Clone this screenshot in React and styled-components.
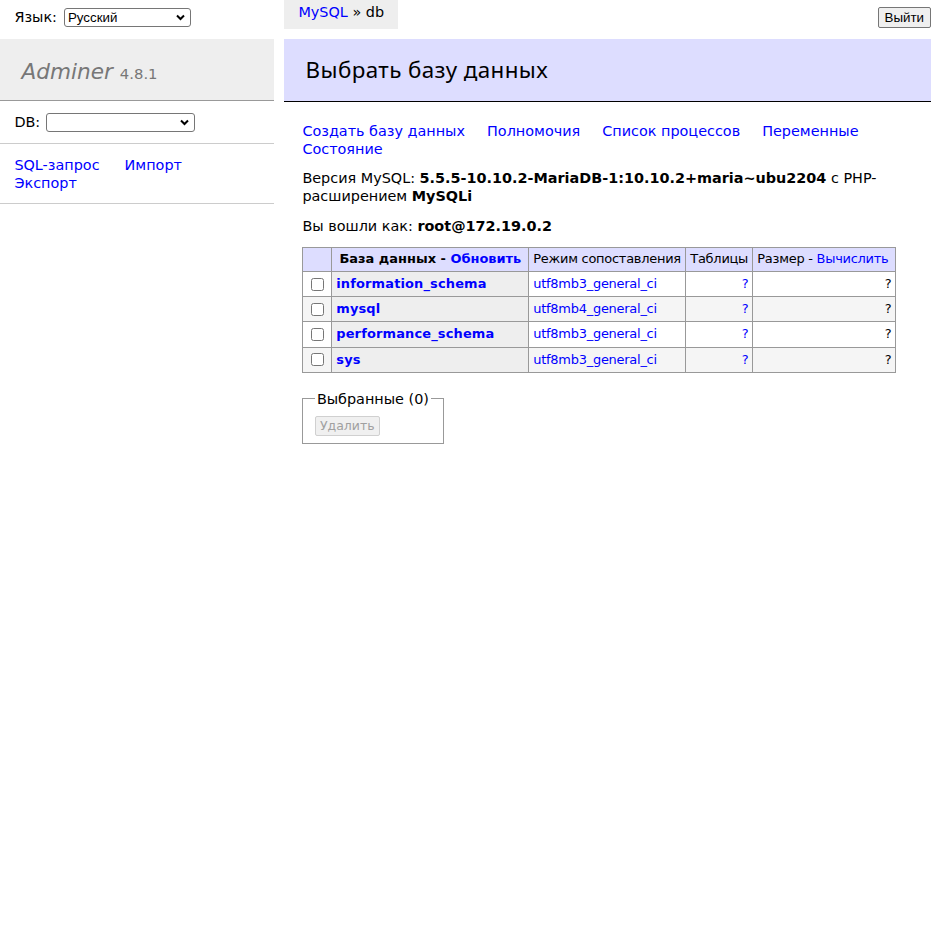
import React from 'react'
import styled, { createGlobalStyle } from 'styled-components'

const GlobalStyle = createGlobalStyle`
  html, body {
    margin: 0;
    padding: 0;
    background: #fff;
  }
  body {
    color: #000;
    font: 14.4px/1.25 "DejaVu Sans", Verdana, sans-serif;
  }
  a {
    color: blue;
    text-decoration: none;
  }
`

const Page = styled.div`
  display: flex;
  flex-direction: column;
  width: 951px;
`

const TopBar = styled.div`
  display: flex;
  align-items: flex-start;
  height: 39px;
`

const LangBox = styled.div`
  width: 284px;
  box-sizing: border-box;
  padding: 4.3px 14.4px;
  line-height: 26px;
  display: flex;
  align-items: center;
  gap: 7px;
`

const SelectWrap = styled.span`
  position: relative;
  display: inline-flex;
  width: ${p => p.$width}px;
  height: 19px;
`

const NativeSelect = styled.select`
  appearance: none;
  width: 100%;
  height: 100%;
  box-sizing: border-box;
  border: 1px solid #767676;
  border-radius: 3px;
  background: #fff;
  padding: 0 20px 0 3px;
  font: 13.33px "Liberation Sans", Arial, sans-serif;
  color: #000;
`

const Chevron = styled.svg`
  position: absolute;
  right: 6px;
  top: 6px;
  pointer-events: none;
`

const Breadcrumb = styled.div`
  background: #eee;
  height: 28.8px;
  line-height: 25.9px;
  padding: 0 14.4px;
  white-space: nowrap;
`

const Spacer = styled.div`
  flex: 1;
`

const LogoutButton = styled.button`
  margin: 7px 20px 0 0;
  height: 21px;
  padding: 0 6px;
  font: 13.33px "Liberation Sans", Arial, sans-serif;
  color: #000;
  background: #efefef;
  border: 1px solid #767676;
  border-radius: 2px;
`

const Main = styled.div`
  display: flex;
  align-items: flex-start;
`

const Sidebar = styled.div`
  width: 273.6px;
  flex: none;
`

const Logo = styled.h1`
  margin: 0;
  height: 62px;
  box-sizing: border-box;
  padding: 19px 21.6px 0;
  font-size: 21.6px;
  line-height: 27px;
  font-weight: normal;
  color: #777;
  background: #eee;
  border-bottom: 1px solid #999;
  white-space: nowrap;
`

const LogoName = styled.a`
  color: #777;
  font-style: italic;
`

const Version = styled.span`
  font-size: 14.8px;
  line-height: 0;
  color: #777;
`

const MenuBlock = styled.div`
  padding: 11.52px 14.4px;
  border-bottom: 1px solid #ccc;
  display: flex;
  align-items: center;
  gap: ${p => p.$gap || 0}px;
  flex-wrap: wrap;
`

const MenuLinks = styled.div`
  padding: 11.52px 14.4px;
  border-bottom: 1px solid #ccc;
`

const LinkRow = styled.div`
  display: flex;
  flex-wrap: wrap;
  column-gap: ${p => p.$gap || 25}px;
`

const Content = styled.div`
  flex: 1;
  margin-left: 10.4px;
  padding-right: 20px;
`

const Title = styled.h2`
  margin: 0 0 20px;
  padding: 17.28px 21.6px;
  font: 400 22.4px/27px "Noto Sans", "Open Sans", sans-serif;
  letter-spacing: 0.4px;
  color: #000;
  background: #ddf;
  border-bottom: 1px solid #000;
`

const Body = styled.div`
  padding-left: 18.4px;
`

const Para = styled.p`
  margin: ${p => (p.$first ? 0 : '11.52px')} 20px 0 0;
`

const DbTable = styled.table`
  margin-top: 12.5px;
  border-collapse: collapse;
  table-layout: fixed;
  width: 593px;
  font-size: 12.96px;
  line-height: 16.2px;
`

const HeadRow = styled.tr`
  height: 24px;
  background: #ddf;
`

const Row = styled.tr`
  height: 25px;
  background: ${p => (p.$odd ? '#f5f5f5' : '#fff')};
`

const Cell = styled.td`
  border: 1px solid #999;
  padding: 2.6px 3.9px;
  text-align: ${p => p.$align || 'left'};
  letter-spacing: -0.25px;
  white-space: nowrap;
  overflow: hidden;
`

const HeadTh = styled.th`
  border: 1px solid #999;
  padding: 2.6px 6.5px;
  text-align: center;
  white-space: nowrap;
`

const NameTh = styled.th`
  border: 1px solid #999;
  padding: 2.6px 3.9px;
  text-align: left;
  background: #eee;
  letter-spacing: 0.15px;
  white-space: nowrap;
`

const Check = styled.input`
  margin: 3px 3px 3px 4px;
  width: 13px;
  height: 13px;
  vertical-align: middle;
`

const Fieldset = styled.fieldset`
  display: inline-block;
  align-self: flex-start;
  margin: 17px 0 0;
  padding: 8px 11.5px 7.5px;
  border: 1px solid #999;
  width: 117px;
`

const Legend = styled.legend`
  padding: 0 2px;
  line-height: 18px;
`

const DisabledButton = styled.button`
  height: 20px;
  padding: 0 4px;
  font: 12.5px "DejaVu Sans", Verdana, sans-serif;
  color: #a0a0a0;
  background: #f0f0f0;
  border: 1px solid #d0d0d0;
  border-radius: 2px;
`

const BodyCol = styled.div`
  display: flex;
  flex-direction: column;
`

const databases = [
  { name: 'information_schema', collation: 'utf8mb3_general_ci' },
  { name: 'mysql', collation: 'utf8mb4_general_ci' },
  { name: 'performance_schema', collation: 'utf8mb3_general_ci' },
  { name: 'sys', collation: 'utf8mb3_general_ci' },
]

const Select = ({ width, children }) => (
  <SelectWrap $width={width}>
    <NativeSelect>{children}</NativeSelect>
    <Chevron width="9" height="7" viewBox="0 0 9 7">
      <path d="M1 1.5 L4.5 5 L8 1.5" stroke="#000" strokeWidth="2" fill="none" />
    </Chevron>
  </SelectWrap>
)

export default function App() {
  return (
    <Page>
      <GlobalStyle />
      <TopBar>
        <LangBox>
          Язык:
          <Select width={127}>
            <option>Русский</option>
          </Select>
        </LangBox>
        <Breadcrumb>
          <a href="#">MySQL</a> » db
        </Breadcrumb>
        <Spacer />
        <LogoutButton>Выйти</LogoutButton>
      </TopBar>
      <Main>
        <Sidebar>
          <Logo>
            <LogoName href="#">Adminer</LogoName> <Version>4.8.1</Version>
          </Logo>
          <MenuBlock $gap={6}>
            DB:
            <Select width={149}>
              <option></option>
            </Select>
          </MenuBlock>
          <MenuLinks>
            <LinkRow>
              <a href="#">SQL-запрос</a>
              <a href="#">Импорт</a>
            </LinkRow>
            <LinkRow>
              <a href="#">Экспорт</a>
            </LinkRow>
          </MenuLinks>
        </Sidebar>
        <Content>
          <Title>Выбрать базу данных</Title>
          <Body>
            <BodyCol>
              <Para $first>
                <LinkRow $gap={22}>
                  <a href="#">Создать базу данных</a>
                  <a href="#">Полномочия</a>
                  <a href="#">Список процессов</a>
                  <a href="#">Переменные</a>
                </LinkRow>
                <LinkRow>
                  <a href="#">Состояние</a>
                </LinkRow>
              </Para>
              <Para>
                Версия MySQL: <b>5.5.5-10.10.2-MariaDB-1:10.10.2+maria~ubu2204</b> с PHP-
                <br />
                расширением <b>MySQLi</b>
              </Para>
              <Para>
                Вы вошли как: <b>root@172.19.0.2</b>
              </Para>
              <DbTable>
                <colgroup>
                  <col style={{ width: 29 }} />
                  <col style={{ width: 197 }} />
                  <col style={{ width: 157 }} />
                  <col style={{ width: 67 }} />
                  <col style={{ width: 143 }} />
                </colgroup>
                <thead>
                  <HeadRow>
                    <Cell />
                    <HeadTh>
                      База данных - <a href="#">Обновить</a>
                    </HeadTh>
                    <Cell>Режим сопоставления</Cell>
                    <Cell>Таблицы</Cell>
                    <Cell>
                      Размер - <a href="#">Вычислить</a>
                    </Cell>
                  </HeadRow>
                </thead>
                <tbody>
                  {databases.map((db, i) => (
                    <Row key={db.name} $odd={i % 2 === 1}>
                      <Cell>
                        <Check type="checkbox" />
                      </Cell>
                      <NameTh>
                        <a href="#">{db.name}</a>
                      </NameTh>
                      <Cell>
                        <a href="#">{db.collation}</a>
                      </Cell>
                      <Cell $align="right">
                        <a href="#">?</a>
                      </Cell>
                      <Cell $align="right">?</Cell>
                    </Row>
                  ))}
                </tbody>
              </DbTable>
              <Fieldset>
                <Legend>Выбранные (0)</Legend>
                <DisabledButton disabled>Удалить</DisabledButton>
              </Fieldset>
            </BodyCol>
          </Body>
        </Content>
      </Main>
    </Page>
  )
}
